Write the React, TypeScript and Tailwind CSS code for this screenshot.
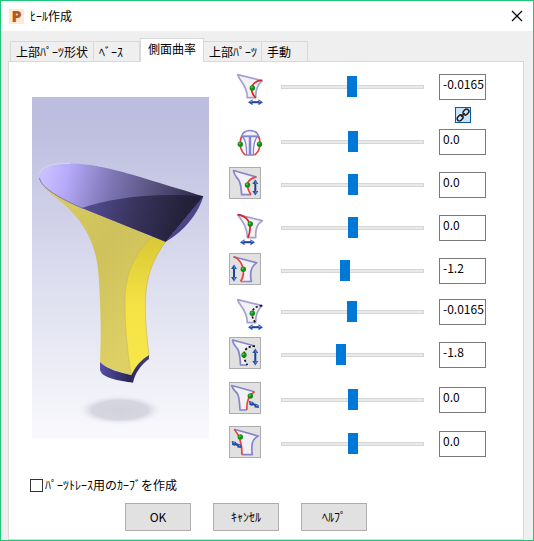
import { useState } from "react";
import type { ReactNode } from "react";

const OUTLINE = "#8784cc";
const RED = "#ee3f3f";

function Dot({ x, y }: { x: number; y: number }) {
  return (
    <g>
      <circle cx={x} cy={y} r="2.7" fill="#158a15" />
      <circle cx={x - 0.6} cy={y - 0.7} r="1.1" fill="#4fc84f" />
    </g>
  );
}

function Arrow({ x, y, length, angle }: { x: number; y: number; length: number; angle: number }) {
  const h = length / 2;
  return (
    <g transform={`translate(${x} ${y}) rotate(${angle})`}>
      <path d={`M${-h + 3} 0H${h - 3}`} stroke="#203f8f" strokeWidth="2" />
      <path d={`M${-h} 0L${-h + 4.5} -3V3ZM${h} 0L${h - 4.5} -3V3Z`} fill="#2450ad" />
      <path d={`M${-h + 1.5} -.4L${-h + 4} -1.6V0ZM${h - 1.5} -.4L${h - 4} -1.6V0Z`} fill="#6fa0ea" />
    </g>
  );
}

function SlantArrow({ x, y }: { x: number; y: number }) {
  return (
    <g transform={`translate(${x} ${y})`}>
      <path d="M-3 -1.500L3 1.500" stroke="#203f8f" strokeWidth="2" />
      <path d="M-5 -3.500L-.5 -2.500L-1.500 1.500L-4.500 .5ZM5 3.500L.5 3L1 -1L4.500 .5Z" fill="#2450ad" />
      <path d="M-4 -2.700L-1.500 -2L-2.500 -.7ZM1.700 0L4 1L2.500 1.800Z" fill="#6fa0ea" />
    </g>
  );
}

function Glyph({ children }: { children: ReactNode }) {
  return (
    <svg viewBox="0 0 32 32" className="block size-8 overflow-visible" fill="none" strokeWidth="1.7" strokeLinejoin="round" aria-hidden="true">
      {children}
    </svg>
  );
}

const glyphs: ReactNode[] = [
  <Glyph>
    <path d="M25.3 7.7L.7 1.7C2 8 10.2 11 10.3 24.7H18.7C18.5 17 20 12 25.3 7.7Z" fill="#f1f1f6" stroke="#a3a1cc" />
    <path d="M25 7.3C15.500 8 10.500 15.500 18.700 25" stroke="#dc2026" />
    <Dot x={15.3} y={15} />
    <Arrow x={18.5} y={29.2} length={15} angle={0} />
  </Glyph>,
  <Glyph>
    <path d="M4.700 8.300C5 4.500 9 2.500 13 2.500S21 4.500 21.700 8.300Z" fill="#f1f1f6" stroke={OUTLINE} />
    <path d="M5.500 8.500C9 12 9.800 17 9.500 27H16.500C16.200 17 17 12 20.500 8.500ZM12.400 9V27M13.600 9V27M8.500 27H17.500" fill="#f1f1f6" stroke={OUTLINE} strokeWidth="1.300" />
    <path d="M4.700 8.500C1.500 15 3.500 23.500 8.500 27M21.500 8.500C24.700 15 22.700 23.500 17.500 27" stroke={RED} />
    <Dot x={3.300} y={16.200} />
    <Dot x={22.500} y={16.200} />
  </Glyph>,
  <Glyph>
    <path d="M27.500 10C20 11 18 16 18.500 19C19 24 21 26 22 27.700H12.700C12 22 12.300 17 9.500 12.800C7.500 10 5 8.500 4.500 3.500Z" fill="#f1f1f6" />
    <path d="M27.500 10L4.500 3.500C5 8.500 7.500 10 9.500 12.800C12.300 17 12 22 12.700 27.700H22" stroke={OUTLINE} />
    <path d="M27.500 10C20 11 18 16 18.500 19C19 24 21 26 22 27.700" stroke={RED} />
    <Dot x={18.500} y={18} />
    <Arrow x={26.300} y={20.500} length={16} angle={90} />
  </Glyph>,
  <Glyph>
    <path d="M.7 .7L25.300 6.700C20 10 18.500 14 18.700 23.700H10.500C10 14 7 9 .7 .7Z" fill="#f1f1f6" stroke="#a3a1cc" />
    <path d="M.7 .7C9 2 17 8 11 23.700" stroke="#dc2026" />
    <Dot x={13.300} y={10} />
    <Arrow x={10.500} y={28.200} length={15} angle={0} />
  </Glyph>,
  <Glyph>
    <path d="M4.500 3.700L27.700 9.700C22 13 20.500 19 22.300 28.500H11.700C18.500 17 11 5.500 4.500 3.700Z" fill="#f1f1f6" />
    <path d="M4.500 3.700L27.700 9.700C22 13 20.500 19 22.300 28.500H11.700" stroke={OUTLINE} />
    <path d="M4.500 3.700C11 5.500 18.500 17 11.700 28.500" stroke={RED} />
    <Dot x={14.300} y={16.300} />
    <Arrow x={5} y={20} length={17} angle={90} />
  </Glyph>,
  <Glyph>
    <path d="M25.300 7.700L.7 1.700C2 8 10.200 11 10.300 24.700H18.700C18.500 17 20 12 25.300 7.700Z" fill="#f1f1f6" stroke="#a3a1cc" />
    <path d="M25 7.700C15.500 8 11.500 15.500 18.700 25" stroke="#111" strokeDasharray="2.300 1.900" />
    <Dot x={15.300} y={15.300} />
    <Arrow x={18.500} y={29.200} length={15} angle={0} />
  </Glyph>,
  <Glyph>
    <path d="M26 9C15 8.500 11.500 18 18.500 28H11.500C11 20 11 16 8.500 11.800C6.500 9 4 7.500 3.500 3Z" fill="#f1f1f6" />
    <path d="M26 9L3.500 3C4 7.500 6.500 9 8.500 11.800C11 16 11 20 11.500 28H18" stroke={OUTLINE} />
    <path d="M26 9.300C15 8.500 11.500 18 18.500 28" stroke="#111" strokeDasharray="2.300 1.900" />
    <Dot x={15} y={18} />
    <Arrow x={26.300} y={20} length={17} angle={90} />
  </Glyph>,
  <Glyph>
    <path d="M25.500 9.700C19.500 13 17.500 20 17.700 28H11C10.500 20 10.500 15 8.300 11.500C6.500 9 3.500 7.500 2.700 3.500Z" fill="#f1f1f6" />
    <path d="M25.500 9.700L2.700 3.500C3.500 7.500 6.500 9 8.300 11.500C10.500 15 10.500 20 11 28H17.700" stroke={OUTLINE} />
    <path d="M25.500 9.700C19.500 13 17.500 20 17.700 28" stroke={RED} />
    <Dot x={21.300} y={14} />
    <SlantArrow x={25} y={22.500} />
  </Glyph>,
  <Glyph>
    <path d="M5.300 3.300L29.300 10C23 13 22 19 23.300 28.700H13C13 20 12 11 5.300 3.300Z" fill="#f1f1f6" />
    <path d="M5.300 3.300L29.300 10C23 13 22 19 23.300 28.700H13" stroke={OUTLINE} />
    <path d="M5.300 3.300C12 11 13 20 13 28.700" stroke={RED} />
    <Dot x={11.300} y={11} />
    <SlantArrow x={7.700} y={18.500} />
  </Glyph>,
];

type Param = { name: string; value: string; framed: boolean };

const params: Param[] = [
  { name: "前面カーブ 水平", value: "-0.01657", framed: false },
  { name: "左右カーブ", value: "0.0", framed: false },
  { name: "前面カーブ 垂直", value: "0.0", framed: true },
  { name: "背面カーブ 水平", value: "0.0", framed: false },
  { name: "背面カーブ 垂直", value: "-1.2", framed: true },
  { name: "内側カーブ 水平", value: "-0.01657", framed: false },
  { name: "内側カーブ 垂直", value: "-1.8", framed: true },
  { name: "前面の傾き", value: "0.0", framed: true },
  { name: "背面の傾き", value: "0.0", framed: true },
];

function ParamRow({ index }: { index: number }) {
  const { name, value, framed } = params[index];
  const [current, setCurrent] = useState(value);
  return (
    <div className="flex h-[26px] items-center">
      {framed ? (
        <div className="shrink-0 pb-1">
          <button type="button" aria-label={name} className="block size-8 bg-[#e1e1e1] outline outline-1 -outline-offset-1 outline-[#adadad]">
            {glyphs[index]}
          </button>
        </div>
      ) : (
        <div className="w-8 shrink-0 pt-1 pl-2">
          {glyphs[index]}
        </div>
      )}
      <input
        type="range"
        aria-label={name}
        min={-10}
        max={10}
        step="any"
        value={Number(current) || 0}
        onChange={(e) => setCurrent(Number(e.target.value).toFixed(1))}
        className="mr-[15px] ml-5 h-[22px] min-w-0 flex-1 appearance-none bg-transparent [&::-webkit-slider-runnable-track]:h-1 [&::-webkit-slider-runnable-track]:border [&::-webkit-slider-runnable-track]:border-[#d6d6d6] [&::-webkit-slider-runnable-track]:bg-[#e7eaea] [&::-webkit-slider-thumb]:-mt-[10px] [&::-webkit-slider-thumb]:h-[21px] [&::-webkit-slider-thumb]:w-[10px] [&::-webkit-slider-thumb]:appearance-none [&::-webkit-slider-thumb]:bg-[#0078d7]"
      />
      <input
        type="text"
        aria-label={name}
        value={current}
        onChange={(e) => setCurrent(e.target.value)}
        className="h-[26px] w-[47px] shrink-0 border border-[#7a7a7a] bg-white pr-px pb-2 pl-[3px] leading-4 outline-none"
      />
    </div>
  );
}

function HeelPreview() {
  return (
    <svg viewBox="0 0 177 341" className="mt-[23px] block h-[341px] w-[177px] shrink-0" role="img" aria-label="ヒール">
      <defs>
        <linearGradient id="sky" x1="0" y1="0" x2="0" y2="1">
          <stop offset="0" stopColor="#bcbddf" />
          <stop offset=".11" stopColor="#bfc0e0" />
          <stop offset=".5" stopColor="#dadbed" />
          <stop offset="1" stopColor="#f9f9fd" />
        </linearGradient>
        <linearGradient id="seat" gradientUnits="userSpaceOnUse" x1="14" y1="75" x2="165" y2="115">
          <stop offset="0" stopColor="#c9beff" />
          <stop offset=".13" stopColor="#b7abfb" />
          <stop offset=".4" stopColor="#8179b9" />
          <stop offset=".7" stopColor="#57517d" />
          <stop offset="1" stopColor="#2b2848" />
        </linearGradient>
        <linearGradient id="seatDark" gradientUnits="userSpaceOnUse" x1="50" y1="100" x2="150" y2="125">
          <stop offset="0" stopColor="#57519a" />
          <stop offset=".5" stopColor="#39355f" />
          <stop offset="1" stopColor="#232039" />
        </linearGradient>
        <linearGradient id="side" x1="0" y1="0" x2=".6" y2="1">
          <stop offset="0" stopColor="#dccf67" />
          <stop offset=".5" stopColor="#cec15b" />
          <stop offset="1" stopColor="#ded065" />
        </linearGradient>
        <linearGradient id="front" x1="0" y1="0" x2="0" y2="1">
          <stop offset="0" stopColor="#d9c835" />
          <stop offset=".5" stopColor="#f5e344" />
          <stop offset="1" stopColor="#f8e74b" />
        </linearGradient>
        <linearGradient id="tip">
          <stop offset="0" stopColor="#574fa6" />
          <stop offset=".6" stopColor="#2b2756" />
          <stop offset="1" stopColor="#454078" />
        </linearGradient>
        <radialGradient id="shadow">
          <stop offset="0" stopColor="#d2d2dc" />
          <stop offset=".65" stopColor="#d6d6e0" />
          <stop offset="1" stopColor="#f0f0f7" stopOpacity="0" />
        </radialGradient>
      </defs>
      <rect width="177" height="341" fill="url(#sky)" />
      <ellipse cx="88" cy="313" rx="43" ry="15" fill="url(#shadow)" />
      <path d="M171.300 99.300C167 115 153 134 133.700 144.700Z" fill="#4b4488" />
      <path d="M8 83C12 95 28 102 39 114C56 132 66 153 67 185C68.500 210 69.300 232 68 265C76 272 88 275 99.300 278.300C96 258 93 235 93 205C93 178 101 160 119 139.700L60 108Z" fill="url(#side)" />
      <path d="M119 139.700C101 160 93 178 93 205C93 235 96 258 99.300 278.300C104 269 109 263 117 258.300C115 240 113 224 113.300 203C114.500 178 121 162 133.700 144.700Z" fill="url(#front)" stroke="#b9ac45" strokeWidth=".5" />
      <path d="M68 265C76 273 88 275 99.300 278.300C104 269 109 263 117 258.300V262C109 268 103 276 101 285.700C88 284 68 281 68 272Z" fill="url(#tip)" />
      <path d="M7.300 80.300C7.500 70 21 66.500 38 66.500C70 67 95 76 171.300 99.300L133.700 144.700L51 111.500C29 102 8 91 7.300 80.300Z" fill="url(#seat)" />
      <path d="M49.700 111C79 101 120 95 171.300 99.300L133.700 144.700Z" fill="url(#seatDark)" />
      <path d="M7.600 77C9 69 22 66.300 38 66.300" fill="none" stroke="#d9d9e2" strokeWidth=".9" />
      <path d="M7.500 81C9 91 29 102 51 111.500" fill="none" stroke="#625a9d" strokeWidth=".7" />
    </svg>
  );
}

const tabs = [
  { label: "上部ﾊﾟｰﾂ形状", size: "w-[84px]" },
  { label: "ﾍﾞｰｽ", size: "w-[46px]" },
  { label: "側面曲率", size: "w-[64px]" },
  { label: "上部ﾊﾟｰﾂ", size: "w-[58px]" },
  { label: "手動", size: "w-[46px]" },
];

export default function App() {
  const [active, setActive] = useState(2);
  return (
    <div className="flex min-h-screen flex-col border border-[#1ec878] bg-[#efefef] font-['Noto_Sans_CJK_JP',sans-serif] text-[12px] leading-4 text-black">
      <header className="flex h-[30px] items-center bg-white pr-2 pl-2">
        <span className="flex size-[15px] items-center justify-center bg-[#fde9d6] font-['Open_Sans',sans-serif] text-[16px] font-extrabold text-[#b55a1d]" aria-hidden="true">P</span>
        <h1 className="ml-1.5 flex-1">ﾋｰﾙ作成</h1>
        <button type="button" aria-label="閉じる" className="flex size-4 items-center justify-center">
          <svg viewBox="0 0 12 12" className="size-3" fill="none" stroke="#000" strokeWidth="1.2" aria-hidden="true">
            <path d="M1 1L11 11M11 1L1 11" />
          </svg>
        </button>
      </header>

      <main className="flex flex-1 flex-col pt-2 pr-[9px] pl-[7px]">
        <div role="tablist" className="flex h-[22px] items-end pl-0.5">
          {tabs.map((tab, i) => (
            <button
              key={tab.label}
              type="button"
              role="tab"
              aria-selected={i === active}
              onClick={() => setActive(i)}
              className={`${tab.size} shrink-0 border-[#d9d9d9] text-left whitespace-nowrap ${
                i === active
                  ? "relative z-10 -mb-px h-6 border-x border-t bg-white pb-1 pl-[7px]"
                  : `h-5 border-t border-r pl-[5px] ${i === 0 ? "border-l" : ""}`
              }`}
            >
              {tab.label}
            </button>
          ))}
        </div>

        <section role="tabpanel" className="flex-1 border border-[#d9d9d9] bg-white pt-3">
          <div className="flex items-start pr-[37px] pl-[23px]">
            <HeelPreview />
            <div className="ml-5 min-w-0 flex-1">
              <ParamRow index={0} />
              <div className="flex h-[29px] items-center justify-end pr-[15px]">
                <button type="button" aria-label="リンク" className="flex size-4 items-center justify-center border border-[#0a5a9e] bg-[#cce4f7]">
                  <svg viewBox="0 0 14 14" className="size-3.5 shrink-0" fill="none" stroke="#1b1b1f" strokeWidth="1.5" aria-hidden="true">
                    <g transform="rotate(-45 7 7)">
                      <rect x="-.3" y="4.700" width="6.300" height="4.600" rx="2.300" />
                      <rect x="8" y="4.700" width="6.300" height="4.600" rx="2.300" />
                      <path d="M4.500 7H9.500" />
                    </g>
                  </svg>
                </button>
              </div>
              <div className="grid grid-rows-[43px_43px_43px_41px_43px_45px_44px_26px]">
                {params.slice(1).map((p, i) => (
                  <ParamRow key={p.name} index={i + 1} />
                ))}
              </div>
            </div>
          </div>

          <label className="mt-[18px] ml-[21px] flex h-5 w-fit items-center gap-0.5">
            <input type="checkbox" className="size-[13px] appearance-none border border-[#333] bg-white checked:bg-[#0078d7]" />
            ﾊﾟｰﾂﾄﾚｰｽ用のｶｰﾌﾞを作成
          </label>

          <div className="mt-2 mb-2 flex gap-[22px] pl-[116px]">
            <button type="button" className="h-7 w-[66px] border border-[#adadad] bg-[#e1e1e1]">OK</button>
            <button type="button" className="h-7 w-[66px] border border-[#adadad] bg-[#e1e1e1]">ｷｬﾝｾﾙ</button>
            <button type="button" className="h-7 w-[66px] border border-[#adadad] bg-[#e1e1e1]">ﾍﾙﾌﾟ</button>
          </div>
        </section>
      </main>
    </div>
  );
}
